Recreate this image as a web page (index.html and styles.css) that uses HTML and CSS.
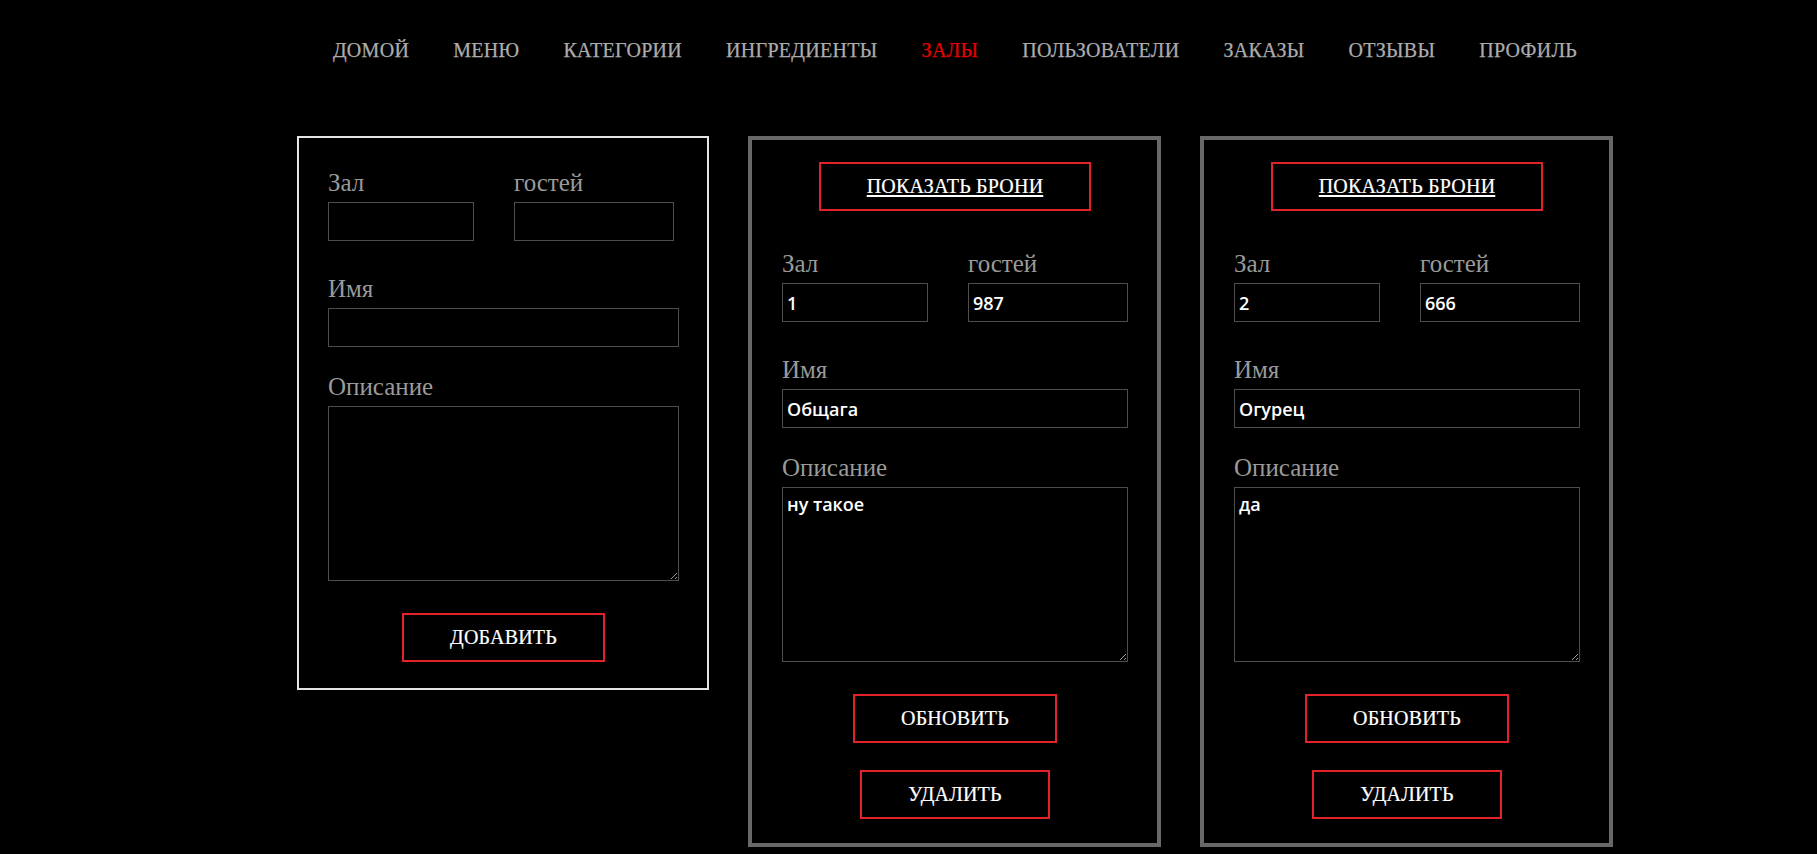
FILE: index.html
```html
<!DOCTYPE html>
<html lang="ru">
<head>
<meta charset="utf-8">
<title>Залы</title>
<link rel="stylesheet" href="styles.css">
</head>
<body>
<nav class="nav">
  <a class="nav-link" href="#">ДОМОЙ</a>
  <a class="nav-link" href="#">МЕНЮ</a>
  <a class="nav-link" href="#">КАТЕГОРИИ</a>
  <a class="nav-link" href="#">ИНГРЕДИЕНТЫ</a>
  <a class="nav-link nav-link-active" href="#">ЗАЛЫ</a>
  <a class="nav-link" href="#">ПОЛЬЗОВАТЕЛИ</a>
  <a class="nav-link" href="#">ЗАКАЗЫ</a>
  <a class="nav-link" href="#">ОТЗЫВЫ</a>
  <a class="nav-link" href="#">ПРОФИЛЬ</a>
</nav>
<main class="halls">
  <form class="card card-new">
    <div class="row">
      <div class="field"><label class="label">Зал</label><input class="input" type="text"></div>
      <div class="field"><label class="label">гостей</label><input class="input" type="text"></div>
    </div>
    <div class="field field-name"><label class="label">Имя</label><input class="input" type="text"></div>
    <div class="field"><label class="label">Описание</label><textarea class="input textarea"></textarea></div>
    <div class="actions"><button class="btn" type="button">ДОБАВИТЬ</button></div>
  </form>

  <form class="card">
    <a class="btn btn-link" href="#">ПОКАЗАТЬ БРОНИ</a>
    <div class="row">
      <div class="field"><label class="label">Зал</label><input class="input" type="text" value="1"></div>
      <div class="field"><label class="label">гостей</label><input class="input" type="text" value="987"></div>
    </div>
    <div class="field field-name"><label class="label">Имя</label><input class="input" type="text" value="Общага"></div>
    <div class="field"><label class="label">Описание</label><textarea class="input textarea">ну такое</textarea></div>
    <div class="actions">
      <button class="btn" type="button">ОБНОВИТЬ</button>
      <button class="btn" type="button">УДАЛИТЬ</button>
    </div>
  </form>

  <form class="card">
    <a class="btn btn-link" href="#">ПОКАЗАТЬ БРОНИ</a>
    <div class="row">
      <div class="field"><label class="label">Зал</label><input class="input" type="text" value="2"></div>
      <div class="field"><label class="label">гостей</label><input class="input" type="text" value="666"></div>
    </div>
    <div class="field field-name"><label class="label">Имя</label><input class="input" type="text" value="Огурец"></div>
    <div class="field"><label class="label">Описание</label><textarea class="input textarea">да</textarea></div>
    <div class="actions">
      <button class="btn" type="button">ОБНОВИТЬ</button>
      <button class="btn" type="button">УДАЛИТЬ</button>
    </div>
  </form>
</main>
</body>
</html>
```
FILE: styles.css
```css
html, body {
  margin: 0;
  background: #000;
}

body {
  font-family: "Liberation Serif", "Times New Roman", serif;
  color: #fff;
}

.nav {
  display: flex;
  justify-content: center;
  padding: 39px 0 0 93px;
}

.nav-link {
  padding: 0 22px;
  font-size: 20px;
  line-height: 23px;
  letter-spacing: 0.3px;
  color: #acacac;
  text-decoration: none;
  white-space: nowrap;
  -webkit-text-stroke: 0.25px currentColor;
}

.nav-link-active {
  color: #e60000;
}

.halls {
  display: flex;
  justify-content: center;
  align-items: flex-start;
  gap: 39px;
  padding-left: 93px;
  margin-top: 74px;
}

.card {
  box-sizing: border-box;
  width: 413px;
  border: 4px solid #686868;
  padding: 22px 29px 24px 30px;
  display: flex;
  flex-direction: column;
  margin: 0;
}

.card-new {
  width: 412px;
  border: 2px solid #e4e4e4;
  padding: 31px 28px 26px 29px;
}

.row {
  display: grid;
  grid-template-columns: 146px 160px;
  column-gap: 40px;
  margin-bottom: 34px;
}

.field-name {
  margin-bottom: 26px;
}

.label {
  display: block;
  font-size: 25px;
  line-height: 28px;
  color: #9a9a9a;
  margin-bottom: 5px;
}

.input {
  display: block;
  box-sizing: border-box;
  width: 100%;
  height: 39px;
  margin: 0;
  background: #000;
  border: 1px solid #4e4e4e;
  border-radius: 0;
  color: #fff;
  font-family: "Comic Sans MS", "Open Sans", sans-serif;
  font-weight: 600;
  font-size: 18px;
  padding: 0 4px;
  outline: none;
}

.textarea {
  height: 175px;
  padding: 4px 4px;
  line-height: 24px;
  resize: both;
}

.actions {
  display: flex;
  flex-direction: column;
  align-items: center;
  gap: 27px;
  margin-top: 32px;
}

.btn {
  display: inline-block;
  box-sizing: border-box;
  border: 2px solid #e3222a;
  background: #000;
  color: #fff;
  font-family: "Liberation Serif", "Times New Roman", serif;
  font-size: 20px;
  line-height: 21px;
  letter-spacing: 0.2px;
  padding: 12px 46px;
  text-decoration: none;
  border-radius: 0;
  margin: 0;
  cursor: pointer;
  -webkit-text-stroke: 0.2px currentColor;
}

.btn-link {
  align-self: center;
  text-decoration: underline;
  text-underline-offset: 2px;
  margin-bottom: 39px;
}
```
